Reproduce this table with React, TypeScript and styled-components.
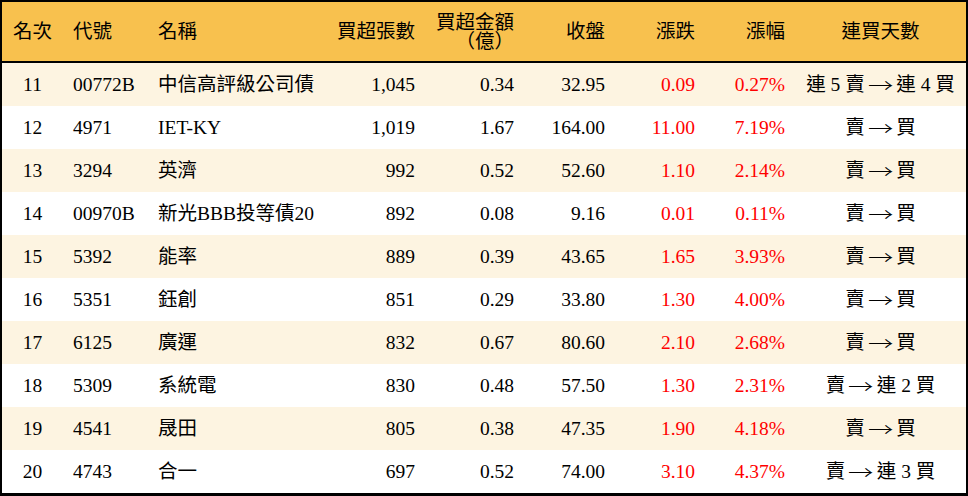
import { createGlobalStyle, styled } from "styled-components";

interface RowData {
  rank: number;
  code: string;
  name: string;
  lots: string;
  amount: string;
  close: string;
  change: string;
  pct: string;
  streak: [string, string];
}

const rows: RowData[] = [
  { rank: 11, code: "00772B", name: "中信高評級公司債", lots: "1,045", amount: "0.34", close: "32.95", change: "0.09", pct: "0.27%", streak: ["連 5 賣", "連 4 買"] },
  { rank: 12, code: "4971", name: "IET-KY", lots: "1,019", amount: "1.67", close: "164.00", change: "11.00", pct: "7.19%", streak: ["賣", "買"] },
  { rank: 13, code: "3294", name: "英濟", lots: "992", amount: "0.52", close: "52.60", change: "1.10", pct: "2.14%", streak: ["賣", "買"] },
  { rank: 14, code: "00970B", name: "新光BBB投等債20", lots: "892", amount: "0.08", close: "9.16", change: "0.01", pct: "0.11%", streak: ["賣", "買"] },
  { rank: 15, code: "5392", name: "能率", lots: "889", amount: "0.39", close: "43.65", change: "1.65", pct: "3.93%", streak: ["賣", "買"] },
  { rank: 16, code: "5351", name: "鈺創", lots: "851", amount: "0.29", close: "33.80", change: "1.30", pct: "4.00%", streak: ["賣", "買"] },
  { rank: 17, code: "6125", name: "廣運", lots: "832", amount: "0.67", close: "80.60", change: "2.10", pct: "2.68%", streak: ["賣", "買"] },
  { rank: 18, code: "5309", name: "系統電", lots: "830", amount: "0.48", close: "57.50", change: "1.30", pct: "2.31%", streak: ["賣", "連 2 買"] },
  { rank: 19, code: "4541", name: "晟田", lots: "805", amount: "0.38", close: "47.35", change: "1.90", pct: "4.18%", streak: ["賣", "買"] },
  { rank: 20, code: "4743", name: "合一", lots: "697", amount: "0.52", close: "74.00", change: "3.10", pct: "4.37%", streak: ["賣", "連 3 買"] },
];

type Align = "left" | "right" | "center";

const GlobalStyle = createGlobalStyle`
  body {
    margin: 0;
    background: #ffffff;
    font-family: "Liberation Serif", "Noto Sans CJK TC", serif;
  }
`;

const Table = styled.div`
  width: 968px;
  box-sizing: border-box;
  border: 2px solid #000;
  border-bottom-width: 3px;
  font-size: 19.5px;
  color: #000;
`;

const columns = "61px 85px 177px 100px 99px 91px 90px 90px 171px";

const HeaderRow = styled.div`
  display: grid;
  grid-template-columns: ${columns};
  height: 59px;
  background: #f8c14e;
  border-bottom: 2px solid #000;
`;

const Row = styled.div<{ $shaded: boolean }>`
  display: grid;
  grid-template-columns: ${columns};
  height: 43px;
  background: ${(p) => (p.$shaded ? "#fdf4e1" : "#ffffff")};
`;

const Cell = styled.div<{ $align: Align; $red?: boolean }>`
  display: flex;
  align-items: center;
  justify-content: ${(p) =>
    p.$align === "left" ? "flex-start" : p.$align === "right" ? "flex-end" : "center"};
  text-align: ${(p) => p.$align};
  padding: 0 10px;
  white-space: pre;
  line-height: 19px;
  color: ${(p) => (p.$red ? "#ff0000" : "#000")};
`;

const Arrow = styled.span`
  display: inline-block;
  font-family: "Noto Sans CJK TC", sans-serif;
  font-weight: 300;
  margin: 0 6px;
  transform: scaleX(1.3);
`;

const aligns: Align[] = ["center", "left", "left", "right", "right", "right", "right", "right", "center"];

export default function App() {
  const headers = ["名次", "代號", "名稱", "買超張數", "買超金額\n（億）", "收盤", "漲跌", "漲幅", "連買天數"];
  return (
    <>
      <GlobalStyle />
      <Table>
        <HeaderRow>
          {headers.map((h, i) => (
            <Cell key={h} $align={aligns[i]}>
              {h}
            </Cell>
          ))}
        </HeaderRow>
        {rows.map((r, i) => (
          <Row key={r.rank} $shaded={i % 2 === 0}>
            <Cell $align="center">{r.rank}</Cell>
            <Cell $align="left">{r.code}</Cell>
            <Cell $align="left">{r.name}</Cell>
            <Cell $align="right">{r.lots}</Cell>
            <Cell $align="right">{r.amount}</Cell>
            <Cell $align="right">{r.close}</Cell>
            <Cell $align="right" $red>{r.change}</Cell>
            <Cell $align="right" $red>{r.pct}</Cell>
            <Cell $align="center">
              {r.streak[0]}
              <Arrow>→</Arrow>
              {r.streak[1]}
            </Cell>
          </Row>
        ))}
      </Table>
    </>
  );
}
